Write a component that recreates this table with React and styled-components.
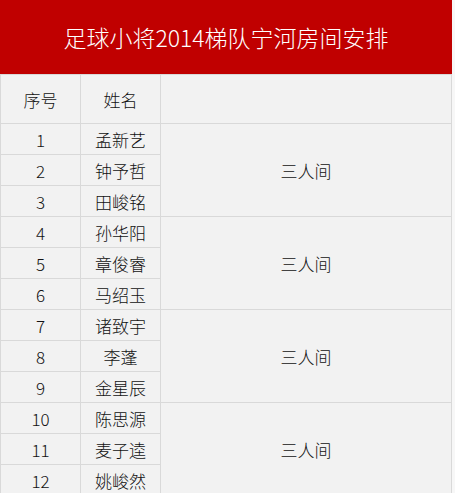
import React from 'react'
import styled, { createGlobalStyle } from 'styled-components'

const GlobalStyle = createGlobalStyle`
  html, body {
    margin: 0;
    padding: 0;
    background: #f7f7f7;
  }
  body {
    font-family: "Noto Sans CJK SC", "Liberation Sans", sans-serif;
  }
`

const Sheet = styled.div`
  width: 452px;
  background: #f2f2f2;
`

const Title = styled.div`
  height: 74px;
  background: #c00000;
  color: #ffffff;
  font-size: 23px;
  font-weight: 300;
  display: flex;
  align-items: center;
  justify-content: center;
`

const Table = styled.table`
  width: 452px;
  border-collapse: collapse;
  table-layout: fixed;
  font-size: 17px;
  font-weight: 300;
  color: #111111;
`

const Cell = styled.td`
  border: 1px solid #d9d9d9;
  height: ${p => (p.$head ? 48 : 30)}px;
  padding: 0;
  text-align: center;
  vertical-align: middle;
  line-height: 1;
`

const groups = [
  ['孟新艺', '钟予哲', '田峻铭'],
  ['孙华阳', '章俊睿', '马绍玉'],
  ['诸致宇', '李蓬', '金星辰'],
  ['陈思源', '麦子逵', '姚峻然'],
]

export default function App() {
  let n = 0
  return (
    <>
      <GlobalStyle />
      <Sheet>
        <Title>足球小将2014梯队宁河房间安排</Title>
        <Table>
          <colgroup>
            <col style={{ width: 80 }} />
            <col style={{ width: 80 }} />
            <col />
          </colgroup>
          <tbody>
            <tr>
              <Cell $head>序号</Cell>
              <Cell $head>姓名</Cell>
              <Cell $head />
            </tr>
            {groups.map(g =>
              g.map((name, i) => {
                n += 1
                return (
                  <tr key={n}>
                    <Cell>{n}</Cell>
                    <Cell>{name}</Cell>
                    {i === 0 && <Cell rowSpan={3}>三人间</Cell>}
                  </tr>
                )
              })
            )}
          </tbody>
        </Table>
      </Sheet>
    </>
  )
}
